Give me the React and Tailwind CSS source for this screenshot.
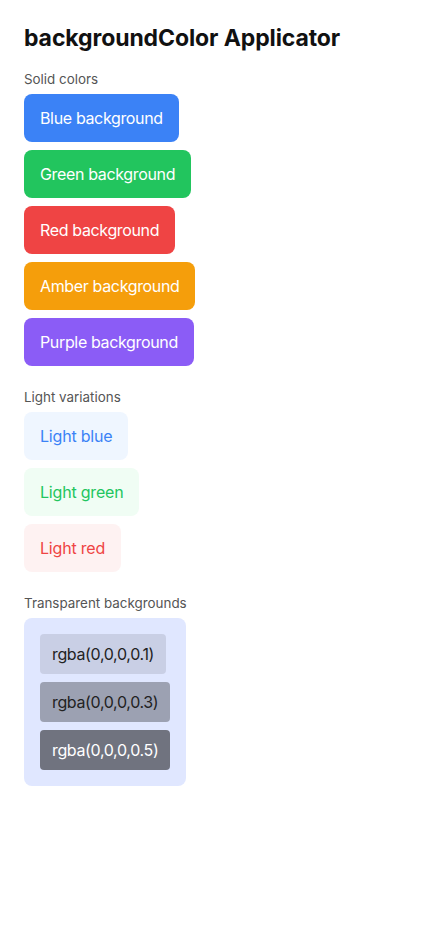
import React from "react";

const solid = [
    { label: "Blue background", cls: "bg-[#3b82f6]" },
    { label: "Green background", cls: "bg-[#22c55e]" },
    { label: "Red background", cls: "bg-[#ef4444]" },
    { label: "Amber background", cls: "bg-[#f59e0b]" },
    { label: "Purple background", cls: "bg-[#8b5cf6]" },
];

const light = [
    { label: "Light blue", cls: "bg-[#eff6ff] text-[#3b82f6]" },
    { label: "Light green", cls: "bg-[#f0fdf4] text-[#22c55e]" },
    { label: "Light red", cls: "bg-[#fef2f2] text-[#ef4444]" },
];

const transparent = [
    { label: "rgba(0,0,0,0.1)", cls: "bg-[rgba(0,0,0,0.1)] text-[#222]" },
    { label: "rgba(0,0,0,0.3)", cls: "bg-[rgba(0,0,0,0.3)] text-[#222]" },
    { label: "rgba(0,0,0,0.5)", cls: "bg-[rgba(0,0,0,0.5)] text-white" },
];

const Section = ({ title, children }) => (
    <div>
        <div className="text-[13.4px] leading-[18px] text-[#555] mb-[6px]">{title}</div>
        {children}
    </div>
);

const App = () => {
    return (
        <div className="min-h-screen bg-white p-6 font-['Inter',sans-serif] text-[#111]">
            <h1 className="text-[23px] leading-7 font-bold tracking-[-0.1px] mb-[18px]">
                backgroundColor Applicator
            </h1>

            <div className="flex flex-col gap-[22px]">
                <Section title="Solid colors">
                    <div className="flex flex-col items-start gap-2">
                        {solid.map(item => (
                            <div key={item.label} className={`${item.cls} text-white text-[16px] leading-6 tracking-[-0.35px] px-4 py-3 rounded-lg`}>
                                {item.label}
                            </div>
                        ))}
                    </div>
                </Section>

                <Section title="Light variations">
                    <div className="flex flex-col items-start gap-2">
                        {light.map(item => (
                            <div key={item.label} className={`${item.cls} text-[16px] leading-6 tracking-[-0.2px] px-4 py-3 rounded-lg`}>
                                {item.label}
                            </div>
                        ))}
                    </div>
                </Section>

                <Section title="Transparent backgrounds">
                    <div className="inline-flex flex-col items-start gap-2 bg-[#e0e7ff] p-4 rounded-lg">
                        {transparent.map(item => (
                            <div key={item.label} className={`${item.cls} text-[16px] leading-6 tracking-[-0.35px] px-3 py-2 rounded`}>
                                {item.label}
                            </div>
                        ))}
                    </div>
                </Section>
            </div>
        </div>
    );
};

export default App;
